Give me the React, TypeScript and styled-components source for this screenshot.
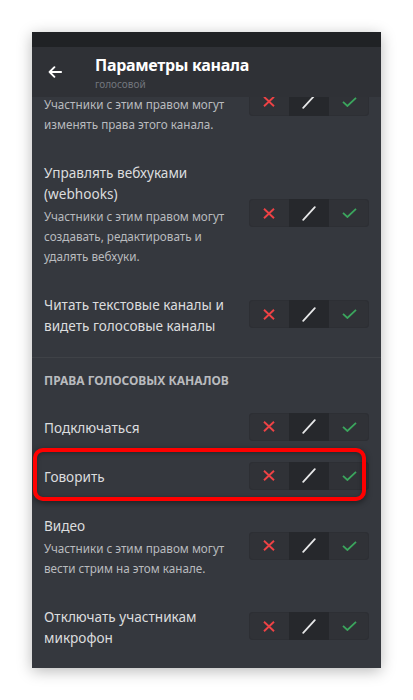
import React from 'react';
import styled, { createGlobalStyle } from 'styled-components';

const GlobalStyle = createGlobalStyle`
  html, body {
    margin: 0;
    padding: 0;
    background: #ffffff;
  }
  body {
    font-family: "Noto Sans", "Open Sans", Arial, sans-serif;
  }
`;

const Page = styled.div`
  padding: 32px 0 0 32px;
  height: 700px;
  box-sizing: border-box;
`;

const Phone = styled.div`
  width: 349px;
  height: 636px;
  display: flex;
  flex-direction: column;
  overflow: hidden;
  background: #35383e;
  box-shadow: 0 3px 14px rgba(0, 0, 0, 0.28);
`;

const StatusBar = styled.div`
  height: 15px;
  flex-shrink: 0;
  background: #202225;
`;

const Header = styled.div`
  height: 50px;
  flex-shrink: 0;
  display: flex;
  align-items: center;
  padding-left: 16px;
  background: #2f3136;
`;

const BackButton = styled.div`
  width: 14px;
  height: 12px;
  display: flex;
  margin-right: 33px;
`;

const HeaderText = styled.div`
  display: flex;
  flex-direction: column;
  padding-top: 1px;
`;

const Title = styled.div`
  font-size: 16px;
  line-height: 21px;
  font-weight: 700;
  letter-spacing: -0.3px;
  color: #ffffff;
`;

const Subtitle = styled.div`
  margin-top: 2px;
  font-size: 10px;
  line-height: 13px;
  color: #72767d;
`;

const Content = styled.div`
  flex: 1;
  overflow: hidden;
`;

const List = styled.div`
  margin-top: -41px;
`;

const Row = styled.div`
  position: relative;
  display: flex;
  align-items: center;
  gap: 12px;
  padding: 10px 12px;
`;

const RowText = styled.div`
  flex: 1;
  min-width: 0;
  padding: 5px 0 3px 0;
`;

const RowTitle = styled.div`
  font-size: 13.6px;
  line-height: 21px;
  color: #dcddde;
`;

const RowDesc = styled.div`
  margin-top: 2px;
  font-size: 11.7px;
  line-height: 20px;
  color: #b9bbbe;
`;

const Toggle = styled.div`
  display: flex;
  flex-shrink: 0;
  height: 28px;
  border-radius: 4px;
  overflow: hidden;
  background: #303237;
  box-shadow: inset 0 0 0 1px #2d2f34;
`;

const Segment = styled.div<{ $active?: boolean }>`
  width: 40px;
  display: flex;
  align-items: center;
  justify-content: center;
  background: ${p => (p.$active ? '#26282c' : 'transparent')};
`;

const Divider = styled.div`
  margin-top: 8px;
  height: 1px;
  background: rgba(255, 255, 255, 0.05);
`;

const SectionTitle = styled.div`
  padding: 15px 12px 13px 12px;
  font-size: 12px;
  line-height: 16px;
  font-weight: 700;
  color: #b9bbbe;
  text-transform: uppercase;
`;

const Highlight = styled.div`
  position: absolute;
  left: 1px;
  right: 15px;
  top: -3px;
  bottom: -1px;
  border: 4px solid #ff0000;
  border-radius: 10px;
  box-shadow: 0 2px 6px rgba(0, 0, 0, 0.45), inset 0 1px 4px rgba(0, 0, 0, 0.35);
  pointer-events: none;
`;

const BackArrow = () => (
  <svg width="14" height="12" viewBox="0 0 14 12" fill="none">
    <path d="M13.2 6H1.6M6.4 1.2L1.6 6L6.4 10.8" stroke="#ffffff" strokeWidth="1.9" strokeLinecap="round" strokeLinejoin="round" />
  </svg>
);

const DenyIcon = () => (
  <svg width="12" height="11" viewBox="0 0 12 11" fill="none">
    <path d="M1 0.8L11 10.2M11 0.8L1 10.2" stroke="#ed4245" strokeWidth="1.9" />
  </svg>
);

const NeutralIcon = () => (
  <svg width="14" height="15" viewBox="0 0 14 15" fill="none">
    <path d="M1.2 13.8L12.8 1.2" stroke="#e6e7e8" strokeWidth="1.8" strokeLinecap="round" />
  </svg>
);

const AllowIcon = () => (
  <svg width="15" height="10" viewBox="0 0 15 10" fill="none">
    <path d="M1 4.8L5.4 9L14 0.8" stroke="#3ba55d" strokeWidth="1.8" />
  </svg>
);

const PermissionToggle = () => (
  <Toggle>
    <Segment><DenyIcon /></Segment>
    <Segment $active><NeutralIcon /></Segment>
    <Segment><AllowIcon /></Segment>
  </Toggle>
);

interface Permission {
  title: string;
  desc?: string;
  highlighted?: boolean;
}

const channelPermissions: Permission[] = [
  { title: 'Управлять правами', desc: 'Участники с этим правом могут изменять права этого канала.' },
  { title: 'Управлять вебхуками (webhooks)', desc: 'Участники с этим правом могут создавать, редактировать и удалять вебхуки.' },
  { title: 'Читать текстовые каналы и видеть голосовые каналы' },
];

const voicePermissions: Permission[] = [
  { title: 'Подключаться' },
  { title: 'Говорить', highlighted: true },
  { title: 'Видео', desc: 'Участники с этим правом могут вести стрим на этом канале.' },
  { title: 'Отключать участникам микрофон' },
];

const PermissionRow = ({ p }: { p: Permission }) => (
  <Row>
    <RowText>
      <RowTitle>{p.title}</RowTitle>
      {p.desc && <RowDesc>{p.desc}</RowDesc>}
    </RowText>
    <PermissionToggle />
    {p.highlighted && <Highlight />}
  </Row>
);

export default function App() {
  return (
    <>
      <GlobalStyle />
      <Page>
        <Phone>
          <StatusBar />
          <Header>
            <BackButton><BackArrow /></BackButton>
            <HeaderText>
              <Title>Параметры канала</Title>
              <Subtitle>голосовой</Subtitle>
            </HeaderText>
          </Header>
          <Content>
            <List>
              {channelPermissions.map(p => <PermissionRow key={p.title} p={p} />)}
              <Divider />
              <SectionTitle>Права голосовых каналов</SectionTitle>
              {voicePermissions.map(p => <PermissionRow key={p.title} p={p} />)}
            </List>
          </Content>
        </Phone>
      </Page>
    </>
  );
}
